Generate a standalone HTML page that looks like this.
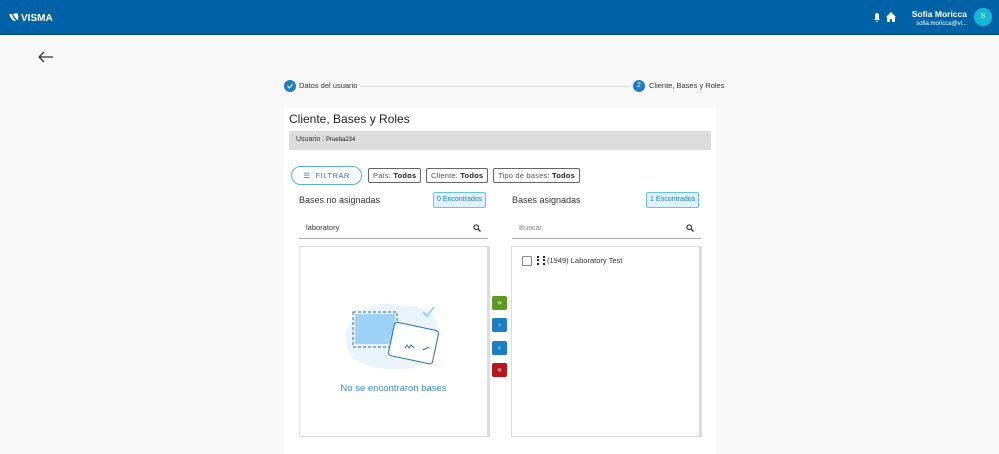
<!DOCTYPE html><html><head><style>
body{margin:0;width:999px;height:454px;overflow:hidden;background:#f8f8f8;font-family:"Liberation Sans",sans-serif;position:relative}
.a{position:absolute}
.hdr{left:0;top:0;width:999px;height:33px;background:#0062a6;border-bottom:2px solid #0a4d80}
.card{left:284px;top:108px;width:432px;height:346px;background:#fff}
.pill{position:absolute;top:168px;height:13px;border:1px solid #666;border-radius:2px;font-size:7.5px;color:#555;line-height:13px;padding:0 4px;letter-spacing:.2px}
.pill b{color:#222}
.cnt{position:absolute;top:192px;height:14px;border:1px solid #6cc0ef;background:#dff1fc;color:#1a7fc6;font-size:7px;line-height:14px;padding:0 3px;border-radius:2px}
.panel{position:absolute;top:246px;width:187px;height:189px;border:1px solid #ddd;border-right:3px solid #ddd;background:#fff}
.btn{position:absolute;left:492px;width:15px;height:14px;border-radius:2px;color:#fff;font-size:8px;text-align:center;line-height:14px}
</style></head><body>
<div class="a hdr"></div>
<svg class="a" style="left:8px;top:11px" width="50" height="12"><path d="M1 3 Q4 11 8 10 Q5 7 4 3Z M5 3 Q8 9 10 9 Q11 5 9 2Z" fill="#fff"/><text x="13" y="10" fill="#fff" font-size="10" font-weight="bold" font-family="Liberation Sans">VISMA</text></svg>
<svg class="a" style="left:872px;top:12px" width="26" height="11"><path d="M2 8 L3 7 V4 Q3 1 5 1 Q7 1 7 4 V7 L8 8Z M4 9 H6 V10 H4Z" fill="#fff"/><path d="M14 5 L19 0 L24 5 H23 V10 H20 V7 H18 V10 H15 V5Z" fill="#fff"/></svg>
<div class="a" style="left:900px;top:9px;width:67px;text-align:right;color:#fff;font-size:8.5px;font-weight:bold">Sofia Moricca</div>
<div class="a" style="left:900px;top:21px;width:67px;text-align:right;color:#fff;font-size:6px">sofia.moricca@vi...</div>
<div class="a" style="left:974px;top:8px;width:18px;height:18px;border-radius:50%;background:#17b8d6;color:#fff;font-size:7px;text-align:center;line-height:18px">S</div>
<svg class="a" style="left:38px;top:51px" width="16" height="12"><path d="M1 6 H15 M1 6 L6 1 M1 6 L6 11" stroke="#333" stroke-width="1.3" fill="none"/></svg>
<div class="a" style="left:284px;top:80px;width:12px;height:12px;border-radius:50%;background:#1a7fc6"></div>
<svg class="a" style="left:284px;top:80px" width="12" height="12"><path d="M3.5 6 L5.3 8 L8.8 4" stroke="#fff" stroke-width="1.1" fill="none"/></svg>
<div class="a" style="left:299px;top:81px;font-size:7.5px;color:#333">Datos del usuario</div>
<div class="a" style="left:360px;top:86px;width:270px;height:1px;background:#ddd"></div>
<div class="a" style="left:633px;top:80px;width:12px;height:12px;border-radius:50%;background:#1a7fc6;color:#fff;font-size:7px;text-align:center;line-height:12px">2</div>
<div class="a" style="left:649px;top:81px;font-size:7.5px;color:#333">Cliente, Bases y Roles</div>
<div class="a card"></div>
<div class="a" style="left:289px;top:112px;font-size:12px;color:#222">Cliente, Bases y Roles</div>
<div class="a" style="left:289px;top:131px;width:422px;height:19px;background:#dcdcdc;border-radius:2px"></div>
<div class="a" style="left:296px;top:136px;font-size:7px;color:#333">Usuario : <span style="font-size:6px;color:#111">Prueba234</span></div>
<div class="a" style="left:291px;top:166px;width:69px;height:17px;border:1px solid #5aaee6;border-radius:10px;color:#1a7fc6;font-size:7.5px;line-height:17px;text-align:center;letter-spacing:.5px">&#9776;&nbsp; FILTRAR</div>
<div class="pill" style="left:368px">País: <b>Todos</b></div>
<div class="pill" style="left:426px">Cliente: <b>Todos</b></div>
<div class="pill" style="left:493px">Tipo de bases: <b>Todos</b></div>
<div class="a" style="left:299px;top:195px;font-size:9px;color:#333">Bases no asignadas</div>
<div class="cnt" style="left:433px">0 Encontrados</div>
<div class="a" style="left:512px;top:195px;font-size:9px;color:#333">Bases asignadas</div>
<div class="cnt" style="left:646px">1 Encontrados</div>
<div class="a" style="left:299px;top:223px;width:189px;height:15px;border-bottom:1px solid #aaa;font-size:7.5px;color:#333"><span style="margin-left:7px">laboratory</span><svg style="position:absolute;right:7px;top:1px" width="8" height="8"><circle cx="3.2" cy="3.2" r="2.3" stroke="#333" stroke-width="1.1" fill="none"/><path d="M5 5 L7.5 7.5" stroke="#333" stroke-width="1.3"/></svg></div>
<div class="a" style="left:512px;top:223px;width:189px;height:15px;border-bottom:1px solid #aaa;font-size:7.5px;color:#888"><span style="margin-left:7px">Buscar</span><svg style="position:absolute;right:7px;top:1px" width="8" height="8"><circle cx="3.2" cy="3.2" r="2.3" stroke="#333" stroke-width="1.1" fill="none"/><path d="M5 5 L7.5 7.5" stroke="#333" stroke-width="1.3"/></svg></div>
<div class="panel" style="left:299px"></div>
<div class="panel" style="left:511px"></div>
<svg class="a" style="left:343px;top:298px" width="100" height="75"><path d="M10 20 Q30 0 60 8 Q90 5 95 30 Q100 60 70 70 Q30 75 10 60 Q-5 40 10 20Z" fill="#eaf4fc"/><rect x="12" y="16" width="40" height="30" fill="#9ed1f6"/><rect x="10" y="14" width="44" height="35" fill="none" stroke="#2b6fb0" stroke-dasharray="3 2"/><rect x="48" y="28" width="45" height="34" rx="3" fill="#fff" stroke="#2b6fb0" transform="rotate(12 70 45)"/><path d="M80 14 L84 18 L91 9" stroke="#9ed1f6" stroke-width="2" fill="none"/><path d="M62 50 l2 -3 l2 3 l2 -3 l3 3 M80 52 l6 -3" stroke="#2b6fb0" fill="none"/></svg>
<div class="a" style="left:299px;top:383px;width:189px;text-align:center;font-size:9.5px;color:#3a8fd3">No se encontraron bases</div>
<div class="a" style="left:522px;top:256px;width:8px;height:8px;border:1px solid #888;border-radius:1px"></div>
<div class="a" style="left:537px;top:256px;width:4px;height:9px;border-left:2px dotted #222;border-right:2px dotted #222"></div>
<div class="a" style="left:547px;top:256px;font-size:7.5px;color:#333">(1949) Laboratory Test</div>
<div class="btn" style="top:296px;background:#5c9b1f">»</div>
<div class="btn" style="top:318px;background:#1a7fc6">›</div>
<div class="btn" style="top:341px;background:#1a7fc6">‹</div>
<div class="btn" style="top:363px;background:#b8171a">«</div>
</body></html>
